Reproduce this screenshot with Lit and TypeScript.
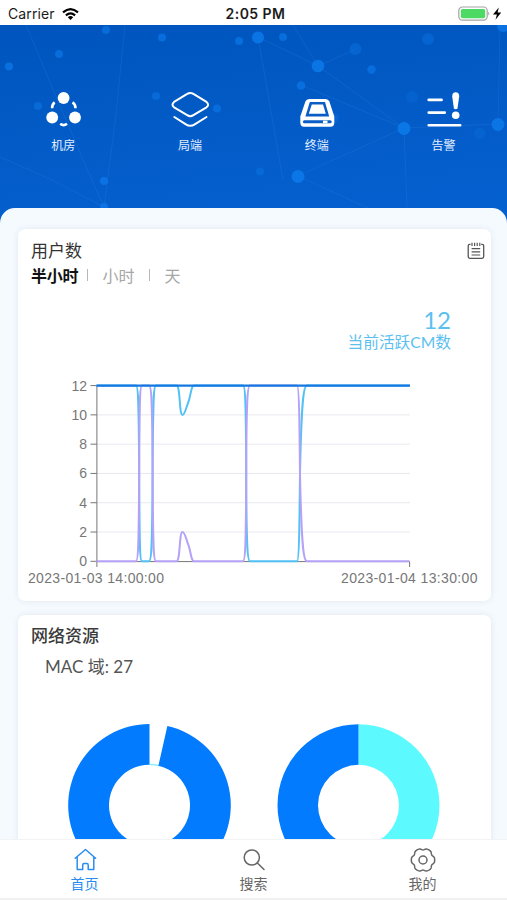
import { LitElement, html, css, svg } from "lit";
import { customElement } from "lit/decorators.js";

const DOTS: [number, number, number, number][] = [
  [106, 5, 4, 0.65], [162, 12.5, 4, 0.7], [239, 16, 4, 0.7], [59, 29, 4, 0.65],
  [9, 41.5, 4, 0.75], [38, 81, 4, 0.55], [156, 71, 4, 0.55], [217, 83.5, 4, 0.65],
  [104, 156, 4, 0.8], [104, 182, 4, 0.8], [258, 12.5, 6, 0.9], [283, 12, 4, 0.7],
  [318, 41, 6.3, 0.9], [301, 60.5, 4.3, 0.7], [355.5, 24, 6, 0.4], [371.5, 44.5, 4.2, 0.7],
  [428, 14, 6, 0.4], [412, 72, 6, 0.25], [404, 103.5, 6.5, 0.95], [498, 99.5, 6.5, 0.9],
  [479.5, 108.5, 6, 0.25], [298, 151.5, 6.5, 0.95], [260, 146.5, 4, 0.45], [503, 1, 6, 0.8],
  [334, 93, 5, 0.3],
];

const LINES = [
  "M26 0L52 62L84 137L104 182", "M125 0L116 90L104 182", "M0 132L50 154L104 182",
  "M258 12L283 155", "M293 0L318 41L404 103", "M258 12L318 41L356 24",
  "M498 99L404 103L298 151L370 184", "M404 103L407 182", "M301 60L404 103", "M500 0L498 99",
];

const TICKS = [12, 10, 8, 6, 4, 2, 0];
const BASE = 191.3;
const TOP = 15.6;
const yOf = (v: number) => BASE - (v * (BASE - TOP)) / 12;

/* One series, drawn either upright (offline) or mirrored (active). */
const series = (f: (v: number) => number) => {
  const a = f(0), b = f(12), p = f(2), q = f(1);
  const m = f(6);
  return (
    `M78.5 ${a}H118C120.5 ${a} 120.8 ${f(1.5)} 121.2 ${m}C121.5 ${f(10.5)} 121.5 ${b} 124 ${b}H131` +
    `C134 ${b} 134.3 ${f(10.5)} 134.6 ${m}C135 ${f(1.5)} 135 ${a} 138 ${a}H158.5` +
    `C162.5 ${a} 161 ${p} 164.5 ${p}C167 ${p} 168.5 ${f(1.4)} 171 ${q}C173 ${f(0.5)} 173.5 ${a} 176 ${a}H225` +
    `C227.6 ${a} 228 ${f(1.5)} 228.2 ${m}C228.4 ${f(10.5)} 229 ${b} 232 ${b}H279`
  );
};
const offline =
  series(yOf) +
  `C281.5 ${TOP} 281.6 ${yOf(8)} 282 ${yOf(6)}C283.5 ${yOf(1)} 285.5 ${BASE} 289 ${BASE}H391.5`;
const flip = (v: number) => yOf(12 - v);
const active =
  series(flip) +
  `C281.5 ${BASE} 281.6 ${yOf(4)} 282 ${yOf(6)}C283.5 ${yOf(11)} 285.5 ${TOP} 289 ${TOP}H391.5`;

/* Ring slice between two clockwise angles in degrees, measured from twelve o'clock. */
const slice = (cx: number, cy: number, r0: number, r1: number, from: number, to: number) => {
  const at = (r: number, d: number) => {
    const t = (d * Math.PI) / 180;
    return `${(cx + r * Math.sin(t)).toFixed(2)} ${(cy - r * Math.cos(t)).toFixed(2)}`;
  };
  const big = to - from > 180 ? 1 : 0;
  return `M${at(r1, from)}A${r1} ${r1} 0 ${big} 1 ${at(r1, to)}L${at(r0, to)}A${r0} ${r0} 0 ${big} 0 ${at(r0, from)}Z`;
};

const cog = () => {
  let d = "";
  for (let i = 0; i <= 120; i++) {
    const t = (i / 120) * Math.PI * 2;
    const r = 11.1 + 0.8 * Math.cos(6 * t) - 0.25 * Math.cos(12 * t);
    d += `${i ? "L" : "M"}${(13 + r * Math.cos(t)).toFixed(2)} ${(13 + r * Math.sin(t)).toFixed(2)}`;
  }
  return d + "Z";
};

@customElement("status-bar")
class StatusBar extends LitElement {
  static styles = css`
    :host { display: grid; grid-template-columns: 1fr auto 1fr; align-items: center; height: 25px;
      background: #fff; color: #1c1c1c; padding: 2px 5px 0 8px; box-sizing: border-box;
      font: 14px/20px Inter, sans-serif; }
    .left, .right { display: flex; align-items: center; }
    .left { gap: 7px; letter-spacing: 0.12px; }
    .time { font-weight: 600; letter-spacing: 0.45px; padding-left: 1px; }
    .right { justify-content: flex-end; }
    svg { display: block; }
  `;
  render() {
    return html`
      <div class="left"><span>Carrier</span>
        <svg width="17" height="12" viewBox="0 0 17 12" fill="none" stroke="#000" stroke-width="2.2">
          <path d="M1 4.4Q8.5 -2 16 4.4" /><path d="M3.9 7.3Q8.5 3.4 13.1 7.3" />
          <path d="M5.8 9.2Q8.5 7 11.2 9.2L8.5 12Z" fill="#000" stroke="none" />
        </svg>
      </div>
      <div class="time">2:05 PM</div>
      <div class="right">
        <svg width="44" height="16" viewBox="0 0 44 16">
          <rect x=".8" y="1" width="28.4" height="13.2" rx="3.6" fill="#fff" stroke="#a4a4a4" stroke-width="1.2" />
          <rect x="2.8" y="3" width="24.4" height="9.3" rx="1.8" fill="#4cd964" />
          <path d="M30.3 5.6Q32.2 7.6 30.3 9.6Z" fill="#999" />
          <path d="M40.8 1.6L35 8.6H38.9L37.5 13.8L43.2 6.6H39.6Z" fill="#000" />
        </svg>
      </div>`;
  }
}

@customElement("hero-menu")
class HeroMenu extends LitElement {
  static styles = css`
    :host { display: grid; height: 215px; background: linear-gradient(175deg, #0055bd, #0560cf 85%);
      font-family: "Noto Sans CJK SC", sans-serif; }
    .sky, .menu { grid-area: 1 / 1; }
    .menu { display: grid; grid-template-columns: repeat(4, 1fr); padding-top: 65px; z-index: 1; }
    .item { display: flex; flex-direction: column; align-items: center; gap: 2px; color: #e4efff;
      font-size: 12px; line-height: 18px; }
    svg { display: block; }
  `;
  render() {
    const item = (icon: unknown, label: string) => html`<div class="item">
      <svg width="40" height="44" viewBox="0 0 40 44" fill="none" stroke="#fff" stroke-linecap="round" stroke-linejoin="round">${icon}</svg>
      <span>${label}</span></div>`;
    return html`
      <svg class="sky" width="507" height="215" viewBox="0 0 507 215">
        ${LINES.map((d) => svg`<path d=${d} fill="none" stroke="#2379da" stroke-opacity=".3" />`)}
        ${DOTS.map(([x, y, r, o]) => svg`<circle cx=${x} cy=${y} r=${r} fill="#0c78e8" fill-opacity=${o} />`)}
      </svg>
      <div class="menu">
        ${item(svg`<g fill="#fff" stroke="none"><circle cx="20.6" cy="8" r="5.9"/><circle cx="9.2" cy="27.5" r="5.9"/><circle cx="32" cy="27.5" r="5.9"/></g>
          <path d="M11.7 12.3Q9.1 14 9.1 18.3M29.5 12.3Q32.5 14 32.5 18.3M17.2 33.8Q20.6 36.4 24 33.8" stroke-width="2.6" stroke-linecap="butt"/>`, "机房")}
        ${item(svg`<path d="M17.2 3.9Q20.3 1.9 23.4 3.9L36.5 11.9Q39.7 14.7 36.5 17.3L23.4 25.2Q20.3 27.2 17.2 25.2L4.1 17.3Q.9 14.7 4.1 11.9Z" stroke-width="2"/>
          <path d="M4.3 27L15.9 34.3Q20.3 37.3 24.7 34.3L36.5 27" stroke-width="2"/>`, "局端")}
        ${item(svg`<path d="M12.2 8.9H28.6Q31.4 8.9 32.4 11.5L37.3 26.6V32.6Q37.3 36.8 33.6 36.8H7Q3.3 36.8 3.3 32.6V26.6L8.4 11.5Q9.4 8.9 12.2 8.9Z" fill="#fff" stroke="none"/>
          <path d="M12.8 11.9H28L32.2 26.4H8.4Z" fill="#0a5cc6" stroke="none"/>
          <path d="M14.8 14.4H26L28.8 23.8H11.8Z" fill="#fff" stroke="none"/>
          <path d="M7.4 31.8H33.2" stroke="#0a5cc6" stroke-width="3"/><path d="M26 31.8H30.5" stroke-width="2.4" stroke-linecap="butt"/>`, "终端")}
        ${item(svg`<path d="M4.7 9.9H17.6M4.7 22.6H20.8M4.7 35.2H36.2" stroke-width="2.6"/>
          <path d="M28.2 6.2Q28.2 2.2 31.7 2.2Q35.2 2.2 35.2 6.2L33.5 18.4Q31.7 20 29.9 18.4Z" fill="#fff" stroke="none"/>
          <circle cx="31.7" cy="25.3" r="3.8" fill="#fff" stroke="none"/>`, "告警")}
      </div>`;
  }
}

@customElement("users-card")
class UsersCard extends LitElement {
  static styles = css`
    :host { display: block; height: 372px; box-sizing: border-box; padding: 9px 0 0; background: #fff;
      border-radius: 7px; box-shadow: 0 0 6px #dfe7ec; font-family: Lato, "Noto Sans CJK SC", sans-serif; }
    .head { display: flex; justify-content: space-between; padding: 0 6px 0 13px; height: 24px; line-height: 25px; }
    .title { font-size: 17px; color: #333; }
    .note { margin-top: 4px; }
    .tabs { display: flex; align-items: center; padding-left: 13px; height: 26px; font-size: 16px; color: #a6a6a6; }
    .on { color: #111; font-weight: 700; letter-spacing: -0.2px; }
    .bar { width: 1px; height: 12px; background: #b8b8b8; }
    .b1 { margin: 0 14px 0 9px; }
    .b2 { margin: 0 14px 0 15px; }
    .now { color: #5bc0f0; text-align: right; padding: 17px 40px 0 0; }
    .num { font-size: 24px; line-height: 29px; font-weight: 400; }
    .cap { font-size: 15.7px; line-height: 24px; height: 18px; margin-top: -4px; padding-bottom: 3px; }
    .chart { display: block; margin-top: 16px; }
    text { font: 14px "Liberation Sans", sans-serif; fill: #777; }
    svg { display: block; }
  `;
  render() {
    return html`
      <div class="head"><div class="title">用户数</div>
        <svg class="note" width="18" height="18" viewBox="0 0 18 18" fill="none" stroke="#555" stroke-width="1.3">
          <path d="M3.5 2.4H2.6Q1.2 2.4 1.2 4V14.6Q1.2 16.3 2.8 16.3H15Q16.7 16.3 16.7 14.6V4Q16.7 2.4 15.2 2.4H14.2" />
          <path d="M5 .8V4M7.6 .8V4M10.2 .8V4M12.8 .8V4M4.6 6.6H13.2M4.6 9.8H13.2M4.6 13H13.2" stroke-width="1.2" />
        </svg>
      </div>
      <div class="tabs"><span class="on">半小时</span><i class="bar b1"></i><span>小时</span><i class="bar b2"></i><span>天</span></div>
      <div class="now"><div class="num">12</div><div class="cap">当前活跃CM数</div></div>
      <svg class="chart" width="473" height="220" viewBox="0 -3 473 220">
        ${TICKS.map((t) => svg`
          ${t ? svg`<path d=${`M79 ${yOf(t)}H392`} stroke="#e8e9ef"/>` : ""}
          <path d=${`M72.5 ${yOf(t)}H79`} stroke="#777"/>
          <text x="69" y=${yOf(t) + 5} text-anchor="end">${t}</text>`)}
        <path d="M78.9 15V197M78.9 191.6H391.6V197" fill="none" stroke="#777" />
        <g fill="none" stroke-width="2">
          <path d=${active} stroke="#52c1f5" />
          <path d=${offline} stroke="#b5a2f8" />
          <path d="M78.5 15.6H392" stroke="#1478e0" stroke-width="2.4" />
        </g>
        <text x="10" y="213" textLength="136">2023-01-03 14:00:00</text>
        <text x="323" y="213" textLength="136.5">2023-01-04 13:30:00</text>
      </svg>`;
  }
}

@customElement("network-card")
class NetworkCard extends LitElement {
  static styles = css`
    :host { display: block; height: 300px; box-sizing: border-box; padding-top: 8px; background: #fff;
      border-radius: 7px; box-shadow: 0 0 6px #dfe7ec; font-family: Lato, "Noto Sans CJK SC", sans-serif; }
    .title { font-size: 17px; line-height: 25px; color: #3a3a3a; font-weight: 500; padding-left: 13px; }
    .mac { font-size: 17px; line-height: 24px; color: #555; padding: 7px 0 0 27px; }
    svg { display: block; margin-top: 36px; }
  `;
  render() {
    return html`
      <div class="title">网络资源</div>
      <div class="mac">MAC 域: 27</div>
      <svg width="473" height="190" viewBox="0 0 473 190">
        <path d=${slice(131.5, 90.3, 40, 41.6, 0, 14)} fill="#8defff" />
        <path d=${slice(131.5, 90.3, 40.5, 81.3, 12.7, 360)} fill="#027bff" />
        <path d=${slice(340.5, 90.3, 40.5, 81, 0, 180)} fill="#5cfaff" />
        <path d=${slice(340.5, 90.3, 40.5, 81, 180, 360)} fill="#027bff" />
      </svg>`;
  }
}

@customElement("tab-bar")
class TabBar extends LitElement {
  static styles = css`
    :host { display: grid; grid-template-columns: repeat(3, 1fr); height: 61px; box-sizing: border-box; background: #fff;
      border-top: 1px solid #f1f3f5; border-bottom: 2px solid #f1f1f1; padding-top: 7px;
      font: 14px/20px "Noto Sans CJK SC", sans-serif; color: #666; }
    .tab { display: flex; flex-direction: column; align-items: center; }
    .active { color: #2a8cf0; }
    svg { display: block; }
  `;
  render() {
    const icon = (c: unknown) => html`<svg width="26" height="26" viewBox="0 0 26 26" fill="none" stroke="currentColor" stroke-width="1.5" stroke-linejoin="round" stroke-linecap="round">${c}</svg>`;
    return html`
      <div class="tab active">${icon(svg`<path d="M3.2 11.2L13.5 2.5L23.6 11.2M5.2 9.8V22.4H10.7V18Q10.7 16.6 12 16.6H14.9Q16.2 16.6 16.2 18V22.4H21.8V9.8"/>`)}<span>首页</span></div>
      <div class="tab">${icon(svg`<circle cx="10.8" cy="10.5" r="7.6"/><path d="M16.4 16L23 22.5"/>`)}<span>搜索</span></div>
      <div class="tab">${icon(svg`<path d=${cog()}/><circle cx="13" cy="13" r="4"/>`)}<span>我的</span></div>`;
  }
}

@customElement("app-root")
class AppRoot extends LitElement {
  static styles = css`
    :host { display: flex; flex-direction: column; height: 900px; overflow: hidden; background: #fff; }
    .sheet { flex: 1; min-height: 0; overflow: hidden; margin-top: -32px; z-index: 2; background: #f5faff;
      border-radius: 15px 15px 0 0; padding: 21px 16px 0 18px; display: flex; flex-direction: column; gap: 14px; }
    users-card, network-card { flex: none; }
    tab-bar, status-bar { flex: none; z-index: 3; }
  `;
  render() {
    return html`<status-bar></status-bar><hero-menu></hero-menu>
      <div class="sheet"><users-card></users-card><network-card></network-card></div>
      <tab-bar></tab-bar>`;
  }
}
